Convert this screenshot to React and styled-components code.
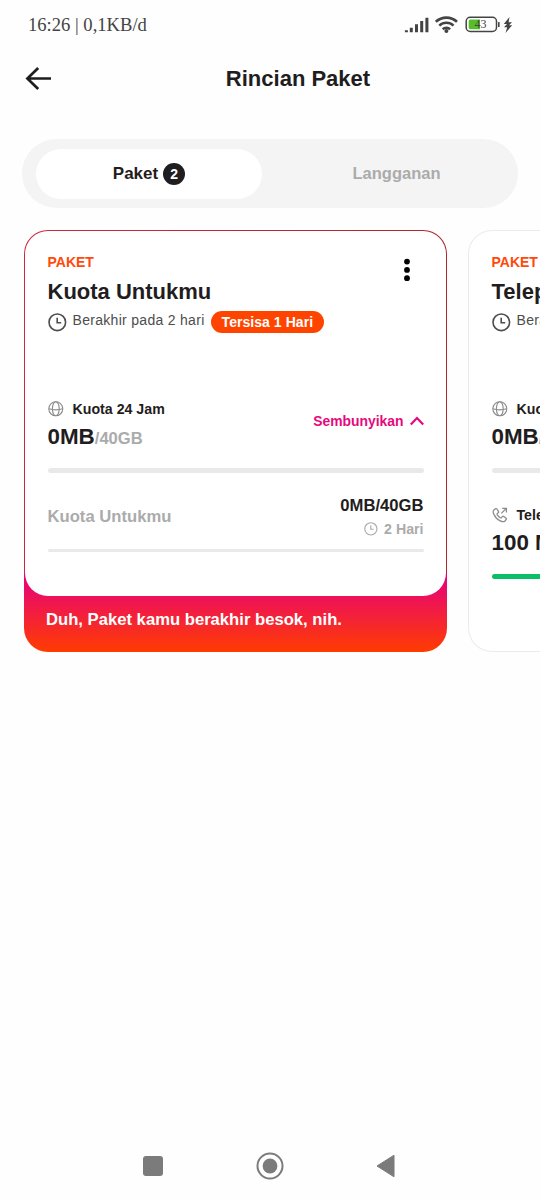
import React from "react";
import styled, { createGlobalStyle } from "styled-components";

const GlobalStyle = createGlobalStyle`
  * {
    box-sizing: border-box;
  }
  body {
    margin: 0;
    background: #fefefe;
    color: #1f1d20;
    font-family: "Liberation Sans", Arial, sans-serif;
  }
  button {
    border: 0;
    padding: 0;
    background: none;
    font: inherit;
    color: inherit;
  }
  svg {
    flex-shrink: 0;
  }
`;

const Page = styled.div`
  display: flex;
  flex-direction: column;
  height: 1200px;
  overflow: hidden;
`;

const StatusBar = styled.div`
  display: flex;
  justify-content: space-between;
  align-items: center;
  height: 50px;
  padding: 0 27px 0 28px;
  color: #444;
  font-family: "Liberation Serif", serif;
  font-size: 18.6px;
`;

const StatusIcons = styled.svg`
  display: block;
  width: 110px;
  height: 20px;
`;

const Header = styled.header`
  display: grid;
  grid-template-columns: 28px 1fr;
  align-items: center;
  height: 58px;
  padding: 0 24px;
`;

const BackButton = styled.button`
  display: flex;
`;

const Title = styled.h1`
  margin: 0 0 0 28px;
  font-size: 22px;
  line-height: 30px;
  text-align: center;
`;

const Tabs = styled.nav`
  display: flex;
  gap: 27px;
  height: 69px;
  margin: 31px 22px 0;
  padding: 9.5px 14px;
  border-radius: 35px;
  background: #f4f4f4;
`;

const Tab = styled.button`
  display: flex;
  justify-content: center;
  align-items: center;
  gap: 5px;
  flex: ${props => (props.$active ? "0 0 226px" : "1")};
  border-radius: 25px;
  background: ${props => (props.$active ? "#fff" : "transparent")};
  color: ${props => (props.$active ? "#1f1d20" : "#ababab")};
  font-size: ${props => (props.$active ? "17px" : "16.5px")};
  font-weight: bold;
`;

const Count = styled.span`
  width: 22px;
  height: 22px;
  border-radius: 50%;
  background: #1f1d20;
  color: #fff;
  font-size: 14px;
  line-height: 22px;
  text-align: center;
`;

const Cards = styled.main`
  display: flex;
  flex: 1;
  align-items: flex-start;
  gap: 21px;
  margin-top: 22px;
  padding-left: 24px;
`;

const Card = styled.article`
  flex: 0 0 423px;
  height: 422px;
  padding: 1px;
  border-radius: 24px;
  background: ${props =>
    props.$expiring
      ? "linear-gradient(#e6007e, #ff3c00) 0 100% / 100% 78px no-repeat, linear-gradient(100deg, #cf2742, #a8262c)"
      : "#ebebeb"};
`;

const CardBody = styled.div`
  height: ${props => (props.$expiring ? "365px" : "100%")};
  padding: 21px 22.5px 0;
  border-radius: 23px;
  background: ${props =>
    props.$expiring ? "#fff" : "linear-gradient(135deg, #fff 60%, #f8f8f8)"};
`;

const CardTop = styled.div`
  display: flex;
  justify-content: space-between;
`;

const Kind = styled.div`
  color: #ff4a0a;
  font-size: 14px;
  font-weight: bold;
  line-height: 20px;
`;

const Name = styled.h2`
  margin: 5px 0 4px;
  font-size: 22px;
  line-height: 30px;
`;

const MenuButton = styled.button`
  display: flex;
  align-self: flex-start;
  margin: 6px 13px 0 0;
`;

const Expiry = styled.div`
  display: flex;
  height: 22px;
  color: #4d4d4d;
  font-size: 14px;
  letter-spacing: 0.3px;
  line-height: 18px;
  white-space: nowrap;

  svg {
    margin: 2px 6px 0 0;
  }
`;

const Pill = styled.span`
  height: 22px;
  margin-left: 6px;
  padding: 0 11px;
  border-radius: 11px;
  background: #ff4400;
  color: #fff;
  font-size: 14px;
  font-weight: bold;
  letter-spacing: 0.05px;
  line-height: 22px;
`;

const Usage = styled.section`
  display: flex;
  justify-content: space-between;
  flex-wrap: wrap;
  align-content: flex-start;
  height: 74px;
  margin-top: ${props => (props.$first ? "66px" : "32px")};
`;

const UsageLabel = styled.div`
  display: flex;
  align-items: center;
  gap: 9px;
  margin-bottom: 4px;
  font-size: 14.2px;
  font-weight: bold;
  line-height: 20px;
`;

const Amount = styled.div`
  height: 28px;
  font-size: 22.4px;
  font-weight: bold;
  line-height: 28px;

  small {
    color: #ababab;
    font-size: 16.6px;
    line-height: 1;
  }
`;

const Toggle = styled.button`
  display: flex;
  align-items: center;
  align-self: flex-start;
  gap: 6px;
  margin-top: 12px;
  color: #e6097d;
  font-size: 13.9px;
  font-weight: bold;
  line-height: 20px;
`;

const Bar = styled.div`
  width: 100%;
  height: ${props => (props.$thin ? "3px" : "5.5px")};
  margin-top: ${props => (props.$thin ? "10px" : "16.5px")};
  border-radius: 3px;
  background: ${props => (props.$full ? "#0abf68" : "#e9e9e9")};
`;

const Detail = styled.div`
  display: flex;
  justify-content: space-between;
  align-items: center;
  height: 44px;
  margin-top: 22px;
  font-size: 16.65px;
  font-weight: bold;
  line-height: 22px;
`;

const DetailName = styled.div`
  color: #ababab;
`;

const DetailValue = styled.div`
  text-align: right;
`;

const Remaining = styled.div`
  display: flex;
  justify-content: flex-end;
  align-items: center;
  gap: 6px;
  margin-top: 2px;
  color: #ababab;
  font-size: 14.2px;
  line-height: 20px;
`;

const Notice = styled.p`
  margin: 12px 0 0 21px;
  color: #fff;
  font-size: 16.65px;
  font-weight: bold;
  line-height: 24px;
`;

const SystemNav = styled.footer`
  display: flex;
  justify-content: space-between;
  align-items: center;
  height: 68px;
  padding: 0 145px 0 143px;
`;

const ClockIcon = ({ size, width }) => (
  <svg width={size} height={size} viewBox="0 0 19 19" fill="none" stroke="currentColor" strokeWidth={width}>
    <circle cx="9.3" cy="9.3" r="8.3" />
    <path d="M9.2 4.8v5h4" />
  </svg>
);

const GlobeIcon = () => (
  <svg width="16" height="16" viewBox="0 0 16 16" fill="none" stroke="#8c8c8c" strokeWidth="1.1">
    <circle cx="7.8" cy="7.8" r="7" />
    <ellipse cx="7.8" cy="7.8" rx="3.4" ry="7" />
    <path d="M.8 7.800q7 2.200 14 0" />
  </svg>
);

const CallIcon = () => (
  <svg width="16" height="16" viewBox="0 0 16 16" fill="none" stroke="#8c8c8c" strokeWidth="1.3">
    <path d="M3.4 1.8 1.8 3.1C.9 4 1.2 6 2 7.6c1.2 2.8 3.4 5 6.2 6.3 1.7.8 3.8 1 4.7.1l1.2-1.500c.4-.5.3-1.100-.2-1.500l-2.200-1.500c-.5-.3-1-.3-1.400.2l-.8.9c-.4.4-.8.4-1.300.1A9.500 9.500 0 0 1 5.300 7.800c-.3-.5-.3-.9.1-1.300l.8-.7c.5-.4.5-.9.2-1.400L4.900 2c-.4-.6-1-.6-1.500-.2Z" />
    <path d="M9.300 6.400 14.300 1.400M10.200 1.300h4.200v4.200" />
  </svg>
);

const PhoneStatus = () => (
  <StatusIcons viewBox="403 15 110 20" fill="#444">
    <path
      d="M406.400 32.300v-2M411.300 32.300v-4.500M416.500 32.300v-8M421.700 32.300v-11.300M426.900 32.300v-14.500"
      fill="none"
      stroke="#444"
      strokeWidth="3"
    />
    <g fill="none" stroke="#444" strokeWidth="2.600">
      <path d="M435.800 21.800a15.500 15.500 0 0 1 21.200 0" />
      <path d="M439.300 25.600a10.300 10.300 0 0 1 14.200 0" />
      <path d="M442.700 29.200a5.500 5.500 0 0 1 7.400 0" />
    </g>
    <circle cx="446.400" cy="31" r="2" />
    <rect x="466.200" y="17.300" width="30.300" height="14.200" rx="4" fill="none" stroke="#444" strokeWidth="1.500" />
    <path d="M470.500 19.500h9.500v9.800h-9.500a1.800 1.800 0 0 1-1.800-1.800v-6.200a1.800 1.800 0 0 1 1.800-1.800Z" fill="#57bd29" />
    <rect x="498" y="22" width="1.600" height="5" rx=".6" />
    <text x="474.500" y="28.200" fontSize="12">43</text>
    <path d="m509.500 17-5.700 7h3.200l-3 3.200h3.200l-1.700 5.800 6.700-7.800h-3.200l3-3h-3.400Z" />
  </StatusIcons>
);

const packages = [
  {
    name: "Kuota Untukmu",
    expiring: true,
    usages: [{ label: "Kuota 24 Jam", used: "0MB", total: "/40GB", icon: <GlobeIcon />, toggle: true }]
  },
  {
    name: "Telepon",
    usages: [
      { label: "Kuota 24 Jam", used: "0MB", total: "/40GB", icon: <GlobeIcon /> },
      { label: "Telepon", used: "100 Menit", icon: <CallIcon />, full: true }
    ]
  }
];

const UsageBlock = ({ usage, first }) => (
  <Usage $first={first}>
    <div>
      <UsageLabel>
        {usage.icon}
        {usage.label}
      </UsageLabel>
      <Amount>
        {usage.used}
        <small>{usage.total}</small>
      </Amount>
    </div>
    {usage.toggle && (
      <Toggle>
        Sembunyikan
        <svg width="14" height="10" viewBox="0 0 14 10" fill="none" stroke="currentColor" strokeWidth="2.200">
          <path d="m.8 8.500 6.200-6.500 6.200 6.500" />
        </svg>
      </Toggle>
    )}
    <Bar $full={usage.full} />
  </Usage>
);

const PackageCard = ({ name, expiring, usages }) => (
  <Card $expiring={expiring}>
    <CardBody $expiring={expiring}>
      <CardTop>
        <div>
          <Kind>PAKET</Kind>
          <Name>{name}</Name>
        </div>
        {expiring && (
          <MenuButton aria-label="Menu">
            <svg width="8" height="24" viewBox="0 0 8 24" fill="#000">
              <circle cx="4" cy="3.600" r="2.900" />
              <circle cx="4" cy="11.900" r="2.900" />
              <circle cx="4" cy="20.200" r="2.900" />
            </svg>
          </MenuButton>
        )}
      </CardTop>
      <Expiry>
        <ClockIcon size={19} width={1.6} />
        Berakhir pada 2 hari
        {expiring && <Pill>Tersisa 1 Hari</Pill>}
      </Expiry>
      {usages.map((usage, i) => (
        <UsageBlock key={usage.label} usage={usage} first={i === 0} />
      ))}
      {expiring && (
        <>
          <Detail>
            <DetailName>Kuota Untukmu</DetailName>
            <DetailValue>
              0MB/40GB
              <Remaining>
                <ClockIcon size={14} width={1.6} />2 Hari
              </Remaining>
            </DetailValue>
          </Detail>
          <Bar $thin />
        </>
      )}
    </CardBody>
    {expiring && <Notice>Duh, Paket kamu berakhir besok, nih.</Notice>}
  </Card>
);

const App = () => (
  <Page>
    <GlobalStyle />
    <StatusBar>
      <span>16:26 | 0,1KB/d</span>
      <PhoneStatus />
    </StatusBar>
    <Header>
      <BackButton aria-label="Kembali">
        <svg width="28" height="26" viewBox="0 0 28 26" fill="none" stroke="#1f1d20" strokeWidth="2.700">
          <path d="M14.200 2 3.400 12.500l10.800 10.500M3.400 12.500h23.600" />
        </svg>
      </BackButton>
      <Title>Rincian Paket</Title>
    </Header>
    <Tabs>
      <Tab $active>
        Paket
        <Count>2</Count>
      </Tab>
      <Tab>Langganan</Tab>
    </Tabs>
    <Cards>
      {packages.map(item => (
        <PackageCard key={item.name} {...item} />
      ))}
    </Cards>
    <SystemNav>
      <svg width="20" height="20" fill="#7b7b7b">
        <rect width="20" height="20" rx="3" />
      </svg>
      <svg width="28" height="28" fill="#7b7b7b">
        <circle cx="14" cy="14" r="12.500" fill="none" stroke="#7b7b7b" strokeWidth="2" />
        <circle cx="14" cy="14" r="7.400" />
      </svg>
      <svg width="19" height="24" fill="#7b7b7b" stroke="#7b7b7b" strokeLinejoin="round">
        <path d="M18 1.200v21.600L1 12Z" />
      </svg>
    </SystemNav>
  </Page>
);

export default App;
